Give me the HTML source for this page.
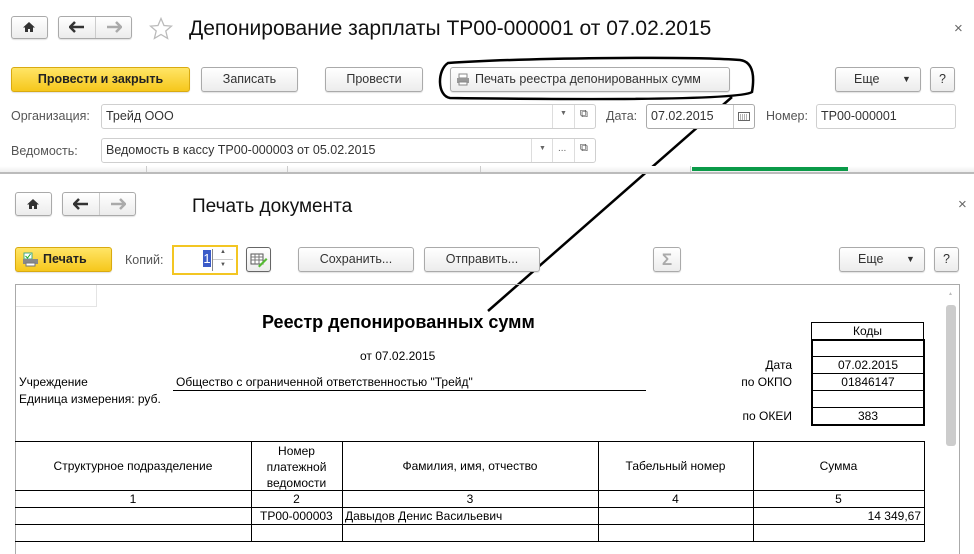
<!DOCTYPE html>
<html><head><meta charset="utf-8"><style>
*{box-sizing:border-box;margin:0;padding:0}
body{width:974px;height:542px;overflow:hidden;background:#fff;font-family:"Liberation Sans",Arial,sans-serif;font-size:12px;color:#333;position:relative}
.a{position:absolute}
.btn{position:absolute;border:1px solid #aaa;border-radius:3px;background:linear-gradient(#fff,#ececec);text-align:center;color:#333;font-size:12.5px;box-shadow:0 1px 1px rgba(0,0,0,.12)}
.yel{background:linear-gradient(#ffe566,#f6c71c);border-color:#d9aa10;color:#222;font-weight:bold}
.inp{position:absolute;border:1px solid #cfcfcf;border-radius:3px;background:#fff;font-size:12.5px;color:#333;padding-left:4px}
.lbl{position:absolute;color:#555;font-size:12.5px}
.t{position:absolute;color:#000;font-size:12px}
.hl{position:absolute;height:1px;background:#000}
.vl{position:absolute;width:1px;background:#000}
</style></head><body>
<!-- top window -->
<div class="btn" style="left:11px;top:16px;width:37px;height:23px"></div>
<svg class="a" style="left:22px;top:21px" width="14" height="12"><path d="M7 1L1 6.5h2V11h3V8h2v3h3V6.5h2z" fill="#333"/></svg>
<div class="btn" style="left:58px;top:16px;width:74px;height:23px"></div>
<div class="a" style="left:95px;top:17px;width:1px;height:21px;background:#ccc"></div>
<svg class="a" style="left:69px;top:21px" width="16" height="12"><path d="M1 6h14M6 1L1 6l5 5" stroke="#333" stroke-width="2.5" fill="none"/></svg>
<svg class="a" style="left:106px;top:21px" width="16" height="12"><path d="M1 6h14M10 1l5 5-5 5" stroke="#aaa" stroke-width="2.5" fill="none"/></svg>
<svg class="a" style="left:149px;top:17px" width="24" height="23"><path d="M12 1.5l3 7 7.5.6-5.7 4.9 1.8 7.4L12 17.5 5.4 21.4l1.8-7.4L1.5 9.1 9 8.5z" fill="none" stroke="#bbb" stroke-width="1.3"/></svg>
<div class="a" style="left:189px;top:17px;font-size:21px;color:#111">Депонирование зарплаты ТР00-000001 от 07.02.2015</div>
<div class="a" style="left:954px;top:20px;font-size:15px;color:#666">×</div>

<div class="btn yel" style="left:11px;top:67px;width:179px;height:25px;line-height:23px">Провести и закрыть</div>
<div class="btn" style="left:201px;top:67px;width:97px;height:25px;line-height:23px">Записать</div>
<div class="btn" style="left:325px;top:67px;width:98px;height:25px;line-height:23px">Провести</div>
<div class="btn" style="left:450px;top:67px;width:280px;height:25px;line-height:23px;text-align:left;padding-left:24px">Печать реестра депонированных сумм</div>
<svg class="a" style="left:456px;top:73px" width="14" height="13"><rect x="3" y="1" width="8" height="4" fill="#fff" stroke="#888"/><rect x="1" y="5" width="12" height="5" fill="#999"/><rect x="3" y="9" width="8" height="3" fill="#fff" stroke="#888"/></svg>
<div class="btn" style="left:835px;top:67px;width:86px;height:25px;line-height:23px;text-align:left;padding-left:18px">Еще<span style="position:absolute;left:66px;top:0;font-size:9px">▼</span></div>
<div class="btn" style="left:930px;top:67px;width:25px;height:25px;line-height:23px">?</div>
<svg class="a" style="left:0;top:0" width="974" height="330"><path d="M448 63C520 58 690 56 740 60C755 62 754 80 752 92C740 100 600 100 450 98C437 96 437 70 448 63Z" fill="none" stroke="#000" stroke-width="2.5"/><path d="M732 97L488 311" stroke="#000" stroke-width="2.5"/></svg>

<div class="lbl" style="left:11px;top:109px">Организация:</div>
<div class="inp" style="left:101px;top:104px;width:495px;height:25px;line-height:23px">Трейд ООО</div>
<div class="a" style="left:552px;top:105px;width:1px;height:23px;background:#ddd"></div>
<div class="a" style="left:574px;top:105px;width:1px;height:23px;background:#ddd"></div>
<div class="a" style="left:560px;top:110px;font-size:7px;color:#666">▼</div>
<div class="a" style="left:580px;top:108px;font-size:11px;color:#444">⧉</div>
<div class="lbl" style="left:606px;top:109px">Дата:</div>
<div class="inp" style="left:646px;top:104px;width:109px;height:25px;line-height:23px;border-color:#aaa">07.02.2015</div>
<div class="a" style="left:733px;top:105px;width:1px;height:23px;background:#ccc"></div>
<svg class="a" style="left:738px;top:112px" width="12" height="9"><rect x=".5" y=".5" width="11" height="8" fill="none" stroke="#666"/><path d="M2 3h8M2 5h8M2 7h8" stroke="#666" stroke-dasharray="1 1"/></svg>
<div class="lbl" style="left:766px;top:109px">Номер:</div>
<div class="inp" style="left:816px;top:104px;width:140px;height:25px;line-height:23px">ТР00-000001</div>

<div class="lbl" style="left:11px;top:144px">Ведомость:</div>
<div class="inp" style="left:101px;top:138px;width:495px;height:25px;line-height:23px">Ведомость в кассу ТР00-000003 от 05.02.2015</div>
<div class="a" style="left:531px;top:139px;width:1px;height:23px;background:#ddd"></div>
<div class="a" style="left:552px;top:139px;width:1px;height:23px;background:#ddd"></div>
<div class="a" style="left:574px;top:139px;width:1px;height:23px;background:#ddd"></div>
<div class="a" style="left:539px;top:145px;font-size:7px;color:#666">▼</div>
<div class="a" style="left:558px;top:143px;font-size:10px;color:#666">...</div>
<div class="a" style="left:580px;top:142px;font-size:11px;color:#444">⧉</div>

<div class="a" style="left:0;top:166px;width:974px;height:6px;background:linear-gradient(#fff,#eee)"></div>
<div class="a" style="left:0;top:172px;width:974px;height:2px;background:#bbb"></div>
<div class="a" style="left:146px;top:166px;width:1px;height:6px;background:#ccc"></div>
<div class="a" style="left:287px;top:166px;width:1px;height:6px;background:#ccc"></div>
<div class="a" style="left:480px;top:166px;width:1px;height:6px;background:#ccc"></div>
<div class="a" style="left:690px;top:166px;width:1px;height:6px;background:#ccc"></div>
<div class="a" style="left:692px;top:167px;width:156px;height:4px;background:#0a9a48"></div>

<!-- print window -->
<div class="btn" style="left:15px;top:192px;width:37px;height:24px"></div>
<svg class="a" style="left:26px;top:198px" width="14" height="12"><path d="M7 1L1 6.5h2V11h3V8h2v3h3V6.5h2z" fill="#333"/></svg>
<div class="btn" style="left:62px;top:192px;width:74px;height:24px"></div>
<div class="a" style="left:99px;top:193px;width:1px;height:22px;background:#ccc"></div>
<svg class="a" style="left:73px;top:198px" width="16" height="12"><path d="M1 6h14M6 1L1 6l5 5" stroke="#333" stroke-width="2.5" fill="none"/></svg>
<svg class="a" style="left:110px;top:198px" width="16" height="12"><path d="M1 6h14M10 1l5 5-5 5" stroke="#aaa" stroke-width="2.5" fill="none"/></svg>
<div class="a" style="left:192px;top:196px;font-size:19px;color:#111">Печать документа</div>
<div class="a" style="left:958px;top:196px;font-size:15px;color:#666">×</div>

<div class="btn yel" style="left:15px;top:247px;width:97px;height:25px;line-height:23px;text-align:left;padding-left:27px">Печать</div>
<svg class="a" style="left:22px;top:252px" width="17" height="15"><rect x="2" y="1" width="8" height="6" fill="#fff" stroke="#4a8"/><path d="M3.5 4l2 2 3-4" stroke="#2a2" fill="none"/><rect x="1" y="7" width="15" height="5" fill="#888"/><rect x="4" y="11" width="9" height="3" fill="#fff" stroke="#777"/></svg>
<div class="lbl" style="left:125px;top:253px">Копий:</div>
<div class="a" style="left:172px;top:245px;width:66px;height:30px;border:2px solid #f3c623;background:#fff"></div>
<div class="a" style="left:203px;top:250px;width:8px;height:17px;background:#3b5bc8;color:#fff;font-size:13px;line-height:17px;text-align:center">1</div>
<div class="a" style="left:212px;top:249px;width:1px;height:22px;background:#888"></div>
<div class="a" style="left:213px;top:259px;width:20px;height:1px;background:#ccc"></div>
<div class="a" style="left:220px;top:249px;font-size:6px;color:#555">▲</div>
<div class="a" style="left:220px;top:262px;font-size:6px;color:#555">▼</div>
<div class="btn" style="left:246px;top:247px;width:25px;height:25px;border-color:#666"></div>
<svg class="a" style="left:250px;top:251px" width="18" height="17"><rect x="1" y="3" width="12" height="10" fill="#fff" stroke="#555"/><path d="M1 6h12M1 9h12M5 3v10M9 3v10" stroke="#777"/><path d="M8 15l8-8 1.5 1.5-8 8z" fill="#5b3"/></svg>
<div class="btn" style="left:298px;top:247px;width:116px;height:25px;line-height:23px">Сохранить...</div>
<div class="btn" style="left:424px;top:247px;width:116px;height:25px;line-height:23px">Отправить...</div>
<div class="btn" style="left:653px;top:247px;width:28px;height:25px;line-height:23px;color:#aaa;font-size:17px;font-weight:bold">Σ</div>
<div class="btn" style="left:839px;top:247px;width:86px;height:25px;line-height:23px;text-align:left;padding-left:18px">Еще<span style="position:absolute;left:66px;top:0;font-size:9px">▼</span></div>
<div class="btn" style="left:934px;top:247px;width:25px;height:25px;line-height:23px">?</div>

<div class="a" style="left:15px;top:284px;width:945px;height:270px;border:1px solid #aaa;border-bottom:none"></div>
<div class="a" style="left:16px;top:285px;width:81px;height:22px;border-right:1px solid #e4e4e4;border-bottom:1px solid #e4e4e4"></div>
<div class="a" style="left:946px;top:305px;width:10px;height:141px;background:#ccc;border-radius:3px"></div>
<div class="a" style="left:948px;top:291px;font-size:5px;color:#bbb">▲</div>

<!-- document -->
<div class="t" style="left:262px;top:312px;font-size:18px;font-weight:bold">Реестр депонированных сумм</div>
<div class="t" style="left:360px;top:349px">от 07.02.2015</div>
<div class="t" style="left:19px;top:375px">Учреждение</div>
<div class="t" style="left:176px;top:375px">Общество с ограниченной ответственностью "Трейд"</div>
<div class="hl" style="left:173px;top:390px;width:473px"></div>
<div class="t" style="left:19px;top:392px">Единица измерения: руб.</div>
<div class="t" style="left:700px;top:358px;width:92px;text-align:right">Дата</div>
<div class="t" style="left:700px;top:375px;width:92px;text-align:right">по ОКПО</div>
<div class="t" style="left:700px;top:409px;width:92px;text-align:right">по ОКЕИ</div>
<div class="a" style="left:811px;top:322px;width:113px;height:18px;border:1px solid #000;text-align:center;line-height:16px;color:#000">Коды</div>
<div class="a" style="left:811px;top:339px;width:114px;height:87px;border:2px solid #000"></div>
<div class="hl" style="left:812px;top:356px;width:112px"></div>
<div class="hl" style="left:812px;top:373px;width:112px"></div>
<div class="hl" style="left:812px;top:390px;width:112px"></div>
<div class="hl" style="left:812px;top:407px;width:112px"></div>
<div class="t" style="left:812px;top:358px;width:112px;text-align:center">07.02.2015</div>
<div class="t" style="left:812px;top:375px;width:112px;text-align:center">01846147</div>
<div class="t" style="left:812px;top:409px;width:112px;text-align:center">383</div>

<div class="hl" style="left:15px;top:441px;width:910px"></div>
<div class="hl" style="left:15px;top:490px;width:910px"></div>
<div class="hl" style="left:15px;top:507px;width:910px"></div>
<div class="hl" style="left:15px;top:524px;width:910px"></div>
<div class="hl" style="left:15px;top:541px;width:910px"></div>
<div class="vl" style="left:251px;top:441px;height:101px"></div>
<div class="vl" style="left:342px;top:441px;height:101px"></div>
<div class="vl" style="left:598px;top:441px;height:101px"></div>
<div class="vl" style="left:753px;top:441px;height:101px"></div>
<div class="vl" style="left:924px;top:441px;height:101px"></div>
<div class="t" style="left:15px;top:459px;width:236px;text-align:center">Структурное подразделение</div>
<div class="t" style="left:251px;top:443px;width:91px;text-align:center;line-height:16px">Номер<br>платежной<br>ведомости</div>
<div class="t" style="left:342px;top:459px;width:256px;text-align:center">Фамилия, имя, отчество</div>
<div class="t" style="left:598px;top:459px;width:155px;text-align:center">Табельный номер</div>
<div class="t" style="left:753px;top:459px;width:171px;text-align:center">Сумма</div>
<div class="t" style="left:15px;top:492px;width:236px;text-align:center">1</div>
<div class="t" style="left:251px;top:492px;width:91px;text-align:center">2</div>
<div class="t" style="left:342px;top:492px;width:256px;text-align:center">3</div>
<div class="t" style="left:598px;top:492px;width:155px;text-align:center">4</div>
<div class="t" style="left:753px;top:492px;width:171px;text-align:center">5</div>
<div class="t" style="left:260px;top:509px">ТР00-000003</div>
<div class="t" style="left:345px;top:509px">Давыдов Денис Васильевич</div>
<div class="t" style="left:753px;top:509px;width:168px;text-align:right">14 349,67</div>
</body></html>
